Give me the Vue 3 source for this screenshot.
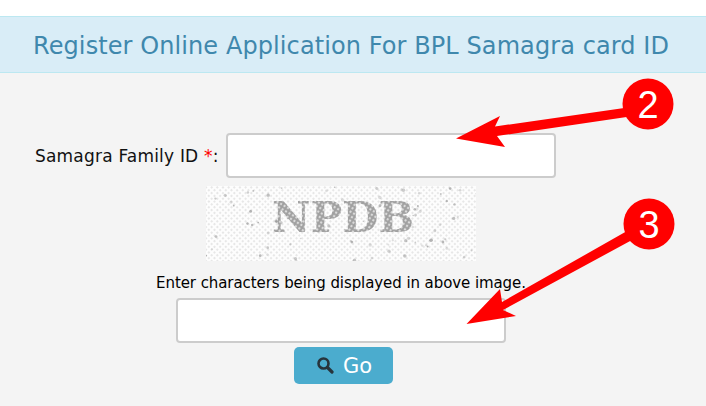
<script setup>
// deterministic speckle for the captcha picture
function speckle(count, seed, minR, maxR) {
  const dots = []
  let s = seed
  const next = () => {
    s = (s * 16807) % 2147483647
    return s / 2147483647
  }
  for (let i = 0; i < count; i++) {
    dots.push({
      x: +(next() * 270).toFixed(1),
      y: +(next() * 75).toFixed(1),
      r: +(minR + next() * (maxR - minR)).toFixed(2),
      o: +(0.2 + next() * 0.4).toFixed(2)
    })
  }
  return dots
}

const dots = speckle(90, 4711, 0.7, 1.8)
</script>

<template>
  <div class="page">
    <h2 class="title">Register Online Application For BPL Samagra card ID</h2>

    <div class="panel">
      <form class="form" @submit.prevent>
        <div class="family-row">
          <label class="family-label" for="family-id">Samagra Family ID <span class="req">*</span>:</label>
          <input id="family-id" class="field" type="text" />
        </div>

        <svg class="captcha" width="270" height="75" viewBox="0 0 270 75">
          <defs>
            <pattern id="grain" width="4" height="4" patternUnits="userSpaceOnUse" patternTransform="rotate(45)">
              <rect width="4" height="4" fill="#fdfdfd" />
              <circle cx="1" cy="1" r="1" fill="#e0e0e0" />
            </pattern>
            <pattern id="letter-grain" width="4" height="4" patternUnits="userSpaceOnUse" patternTransform="rotate(30)">
              <rect width="4" height="4" fill="#a0a0a0" />
              <circle cx="2" cy="2" r="1.200" fill="#dcdcdc" />
            </pattern>
            <filter id="soft" x="-5%" y="-5%" width="110%" height="110%">
              <feGaussianBlur stdDeviation="0.6" />
            </filter>
          </defs>
          <rect width="270" height="75" fill="url(#grain)" />
          <g filter="url(#soft)">
            <circle v-for="(d, i) in dots" :key="i" :cx="d.x" :cy="d.y" :r="d.r" fill="#808080" :opacity="d.o" />
            <text x="66" y="46" class="captcha-text" fill="url(#letter-grain)" textLength="142" lengthAdjust="spacingAndGlyphs">NPDB</text>
          </g>
        </svg>

        <p class="hint">Enter characters being displayed in above image.</p>
        <input class="field" type="text" />

        <button class="go" type="submit">
          <svg class="go-icon" width="18" height="18" viewBox="0 0 18 18">
            <circle cx="7.500" cy="7.500" r="5" fill="none" stroke="#27343c" stroke-width="2.600" />
            <path d="M11.500 11.500 L16 16" stroke="#27343c" stroke-width="3.200" stroke-linecap="round" />
          </svg>
          <span>Go</span>
        </button>
      </form>

      <!-- annotations drawn over the form -->
      <svg class="marks" width="706" height="406" viewBox="0 0 706 406">
        <path d="M456 138.500 L500 116 L495 126.500 L645 105 L647 114 L497 136 L505 147 Z" fill="#ff0000" />
        <circle cx="648" cy="104" r="25.500" fill="#ff0000" />
        <text x="648" y="118" class="mark-num">2</text>

        <path d="M466.500 324 L500 289 L502 302 L627 231 L632 240 L503 310 L516 316 Z" fill="#ff0000" />
        <circle cx="649" cy="224" r="25.500" fill="#ff0000" />
        <text x="649" y="238" class="mark-num">3</text>
      </svg>
    </div>
  </div>
</template>

<style scoped>
.page {
  height: 406px;
  padding-top: 16px;
  box-sizing: border-box;
  display: flex;
  flex-direction: column;
  font-family: "DejaVu Sans", Verdana, sans-serif;
  overflow: hidden;
}

.title {
  margin: 0;
  height: 57px;
  line-height: 53px;
  box-sizing: border-box;
  padding: 2px 0 0 33px;
  background: #d9edf7;
  border-top: 1px solid #bce8f1;
  border-bottom: 1px solid #bce8f1;
  color: #3f88ad;
  font-size: 24px;
  letter-spacing: 0.09px;
  font-weight: normal;
  white-space: nowrap;
}

.panel {
  flex: 1;
  background: #f4f4f4;
}

.form {
  width: 682px;
  padding-top: 60px;
  display: flex;
  flex-direction: column;
  align-items: center;
}

.family-row {
  align-self: flex-start;
  padding-left: 35px;
  display: flex;
  align-items: center;
  gap: 7px;
}

.family-label {
  font-size: 17px;
  letter-spacing: 0.2px;
  color: #111;
  white-space: nowrap;
}

.req {
  color: #ff0000;
}

.field {
  width: 330px;
  height: 45px;
  box-sizing: border-box;
  border: 2px solid #cccccc;
  border-radius: 4px;
  background: #fff;
  padding: 0 8px;
  outline: none;
  display: block;
}

.captcha {
  display: block;
  margin-top: 8px;
}

.hint {
  margin: 14px 0 6px;
  font-size: 15px;
  letter-spacing: -0.08px;
  line-height: 17px;
  color: #000;
  white-space: nowrap;
}

.go {
  margin-top: 4px;
  margin-left: 5px;
  width: 99px;
  height: 37px;
  border: none;
  border-radius: 5px;
  background: #4bacce;
  color: #fff;
  font-family: inherit;
  font-size: 21px;
  display: flex;
  align-items: center;
  justify-content: center;
  gap: 9px;
  padding: 0 0 0 1px;
}

.go-icon {
  display: block;
  margin-top: -2px;
}

.captcha-text {
  font-family: "DejaVu Serif", serif;
  font-weight: bold;
  font-size: 42px;
}

.marks {
  position: absolute;
  left: 0;
  top: 0;
  pointer-events: none;
}

.mark-num {
  font-family: "Liberation Sans", Arial, sans-serif;
  font-size: 38px;
  fill: #fff;
  text-anchor: middle;
}
</style>

<style>
html,
body {
  margin: 0;
  background: #fff;
}

.title {
  line-height: 55px !important;
}
</style>
